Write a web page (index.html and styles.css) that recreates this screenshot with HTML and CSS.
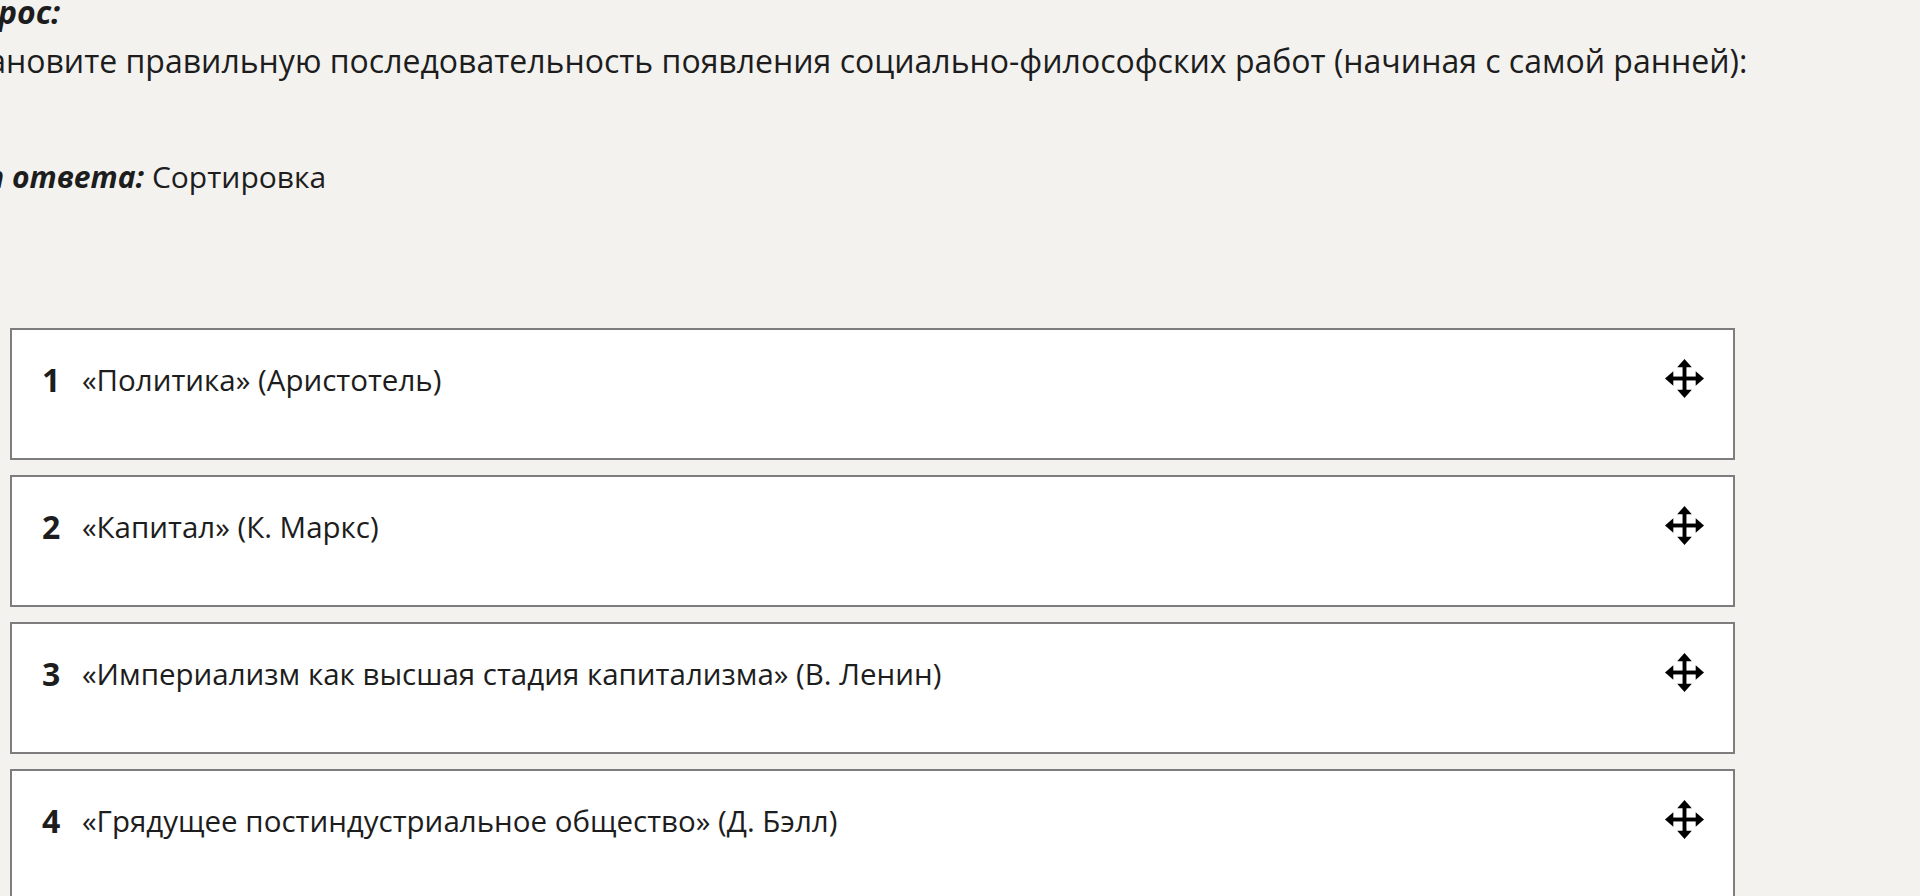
FILE: index.html
```html
<!DOCTYPE html>
<html lang="ru">
<head>
<meta charset="utf-8">
<title>Вопрос</title>
<link rel="stylesheet" href="styles.css">
</head>
<body>
<div class="page">
  <div class="question">
    <p class="line label"><b><i>Вопрос:</i></b></p>
    <p class="line text">Установите правильную последовательность появления социально-философских работ (начиная с самой ранней):</p>
    <p class="line type"><b><i>Тип ответа:</i></b> Сортировка</p>
  </div>
  <ol class="sort-list">
    <li class="item">
      <span class="num">1</span>
      <span class="title">«Политика» (Аристотель)</span>
      <svg class="move" viewBox="0 0 40 40" aria-hidden="true"><rect x="18" y="6" width="4" height="28"/><rect x="6" y="18" width="28" height="4"/><polygon points="20,0 27.5,8.5 12.5,8.5"/><polygon points="20,40 27.5,31.5 12.5,31.5"/><polygon points="0,20 8.5,12.5 8.5,27.5"/><polygon points="40,20 31.5,12.5 31.5,27.5"/></svg>
    </li>
    <li class="item">
      <span class="num">2</span>
      <span class="title">«Капитал» (К. Маркс)</span>
      <svg class="move" viewBox="0 0 40 40" aria-hidden="true"><rect x="18" y="6" width="4" height="28"/><rect x="6" y="18" width="28" height="4"/><polygon points="20,0 27.5,8.5 12.5,8.5"/><polygon points="20,40 27.5,31.5 12.5,31.5"/><polygon points="0,20 8.5,12.5 8.5,27.5"/><polygon points="40,20 31.5,12.5 31.5,27.5"/></svg>
    </li>
    <li class="item">
      <span class="num">3</span>
      <span class="title">«Империализм как высшая стадия капитализма» (В. Ленин)</span>
      <svg class="move" viewBox="0 0 40 40" aria-hidden="true"><rect x="18" y="6" width="4" height="28"/><rect x="6" y="18" width="28" height="4"/><polygon points="20,0 27.5,8.5 12.5,8.5"/><polygon points="20,40 27.5,31.5 12.5,31.5"/><polygon points="0,20 8.5,12.5 8.5,27.5"/><polygon points="40,20 31.5,12.5 31.5,27.5"/></svg>
    </li>
    <li class="item">
      <span class="num">4</span>
      <span class="title">«Грядущее постиндустриальное общество» (Д. Бэлл)</span>
      <svg class="move" viewBox="0 0 40 40" aria-hidden="true"><rect x="18" y="6" width="4" height="28"/><rect x="6" y="18" width="28" height="4"/><polygon points="20,0 27.5,8.5 12.5,8.5"/><polygon points="20,40 27.5,31.5 12.5,31.5"/><polygon points="0,20 8.5,12.5 8.5,27.5"/><polygon points="40,20 31.5,12.5 31.5,27.5"/></svg>
    </li>
  </ol>
</div>
</body>
</html>
```
FILE: styles.css
```css
html, body {
  margin: 0;
  padding: 0;
  background: #f3f2ef;
  overflow: hidden;
}
body {
  font-family: "Open Sans", "Noto Sans", sans-serif;
  font-size: 30px;
  color: #1d1d1d;
}
.page {
  width: 1920px;
  height: 896px;
  overflow: hidden;
}
.question {
  margin-left: -58px;
  margin-top: -13px;
}
.line {
  margin: 0;
  line-height: 49px;
  white-space: nowrap;
}
.label {
  font-size: 32px;
  text-indent: -2px;
}
.text {
  font-size: 32px;
  text-indent: -4px;
}
.type {
  margin-top: 67px;
  text-indent: 10px;
}
.sort-list {
  list-style: none;
  margin: 127px 0 0 10px;
  padding: 0;
  width: 1725px;
  display: flex;
  flex-direction: column;
  gap: 15px;
}
.item {
  box-sizing: border-box;
  height: 132px;
  background: #fff;
  border: 2px solid #7d7d7d;
  padding: 25px 29px 0 30px;
  display: flex;
  align-items: flex-start;
}
.num {
  width: 40px;
  flex: none;
  font-size: 32px;
  font-weight: 700;
  line-height: 49px;
}
.title {
  flex: 1;
  font-size: 29.5px;
  line-height: 49px;
}
.move {
  width: 39px;
  height: 39px;
  flex: none;
  fill: #000;
  margin-top: 4px;
}
```
